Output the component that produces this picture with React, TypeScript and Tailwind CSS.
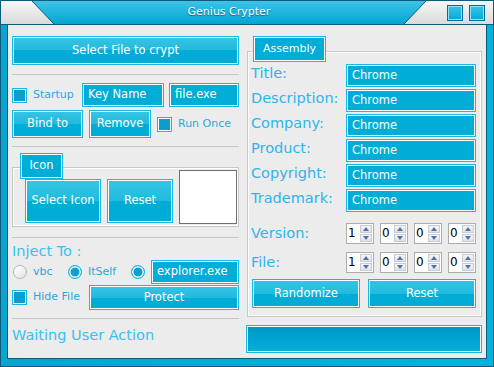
import React from 'react';

const font = 'font-["DejaVu_Sans",sans-serif]';

function Btn({ children, className = '' }: { children: React.ReactNode; className?: string }) {
  return (
    <div
      className={`flex items-center justify-center border border-[#1ab8e0] bg-[linear-gradient(#36c4e5,#22bade_50%,#00add6_50%,#00abd5)] text-[11.5px] text-white shadow-[inset_0_0_0_1px_#ffffff] ${className}`}
    >
      {children}
    </div>
  );
}

function Field({ children, className = '' }: { children: React.ReactNode; className?: string }) {
  return (
    <div
      className={`flex items-center border border-[#1ab8e0] bg-[#00add6] pl-[5px] text-[11.5px] text-white shadow-[inset_0_0_0_1px_#ffffff] ${className}`}
    >
      {children}
    </div>
  );
}

function Check() {
  return <div className="h-[15px] w-[15px] shrink-0 border border-[#1ab8e0] bg-[#0a9dcf] shadow-[inset_0_0_0_1px_#ffffff]" />;
}

function Radio({ on }: { on?: boolean }) {
  if (on)
    return (
      <div className="h-[14px] w-[14px] shrink-0 rounded-full border border-[#1ab8e0] bg-[#0a9fd0] shadow-[inset_0_0_0_1.5px_#ffffff]" />
    );
  return (
    <div className="h-[14px] w-[14px] shrink-0 rounded-full border border-[#b4b4b4] bg-[linear-gradient(135deg,#ffffff,#e2e2e2)]" />
  );
}

function Sep({ className = '' }: { className?: string }) {
  return <div className={`h-[2px] border-t border-[#c5c5c5] border-b-white ${className}`} />;
}

function Tab({ children, className = '' }: { children: React.ReactNode; className?: string }) {
  return (
    <div
      className={`relative z-10 flex items-center justify-center border border-[#1ab8e0] bg-[#00add6] text-[11.5px] text-white shadow-[inset_0_0_0_1px_#ffffff] ${className}`}
    >
      {children}
    </div>
  );
}

function Arrow({ up }: { up?: boolean }) {
  return (
    <svg width="6" height="4" viewBox="0 0 6 4">
      <path d={up ? 'M0 4 L3 0 L6 4 Z' : 'M0 0 L3 4 L6 0 Z'} fill="#5470a8" />
    </svg>
  );
}

function Spin({ v }: { v: string }) {
  return (
    <div className="flex h-[21px] w-[28px] border border-[#acacac] bg-white">
      <div className="flex-1 pl-[1px] text-[12px] leading-[19px] text-black">{v}</div>
      <div className="flex w-[14px] flex-col gap-px p-px">
        <div className="flex flex-1 items-center justify-center border border-[#c7cbd6] bg-[linear-gradient(#f6f6fa,#dfe0e8)]">
          <Arrow up />
        </div>
        <div className="flex flex-1 items-center justify-center border border-[#c7cbd6] bg-[linear-gradient(#f6f6fa,#dfe0e8)]">
          <Arrow />
        </div>
      </div>
    </div>
  );
}

function TitleBar() {
  return (
    <div className="relative flex h-[24px] shrink-0 items-center border-b border-[#0b5c7c] bg-[linear-gradient(#f7f7f7,#dadada)]">
      <svg className="absolute inset-0" width="492" height="23" viewBox="0 0 492 23">
        <defs>
          <linearGradient id="tb" x1="0" y1="0" x2="0" y2="1">
            <stop offset="0" stopColor="#3fc3e6" />
            <stop offset="1" stopColor="#00a6d3" />
          </linearGradient>
        </defs>
        <polygon points="31,0 425,0 403,23 53,23" fill="url(#tb)" />
        <line x1="31" y1="0" x2="53" y2="23" stroke="#0b5c7c" strokeWidth="1" />
        <line x1="425" y1="0" x2="403" y2="23" stroke="#0b5c7c" strokeWidth="1" />
      </svg>
      <div className="relative flex-1 pl-[10px] text-center text-[11px] text-white [text-shadow:0_1px_1px_rgba(0,70,100,0.7)]">
        Genius Crypter
      </div>
      <div className="relative flex gap-[6px] pr-[8px]">
        <div className="h-[16px] w-[16px] border border-[#006f96] bg-[linear-gradient(#39c4e8,#02a9d6)] shadow-[inset_0_0_0_1px_#8fe0f5]" />
        <div className="h-[16px] w-[16px] border border-[#006f96] bg-[linear-gradient(#39c4e8,#02a9d6)] shadow-[inset_0_0_0_1px_#8fe0f5]" />
      </div>
    </div>
  );
}

const labels = ['Title:', 'Description:', 'Company:', 'Product:', 'Copyright:', 'Trademark:'];

export default function App() {
  return (
    <div className={`flex h-[367px] w-[494px] flex-col border border-[#0b5c7c] bg-[linear-gradient(90deg,#0aa4d0,#05b2dc)] ${font}`}>
      <TitleBar />
      <div className="mx-[6px] mb-[7px] flex flex-1 border border-t-0 border-[#0b5c7c] bg-[#ececec] px-[4px]">
        {/* left column */}
        <div className="flex w-[227px] flex-col">
          <Btn className="mt-[11px] h-[29px]">Select File to crypt</Btn>
          <Sep className="mt-[9px]" />
          <div className="mt-[7px] flex h-[24px] items-center">
            <Check />
            <span className="ml-[6px] w-[49px] text-[11px] text-[#2ea6dc]">Startup</span>
            <Field className="h-[24px] w-[82px]">Key Name</Field>
            <Field className="ml-[5px] h-[24px] w-[70px]">file.exe</Field>
          </div>
          <div className="mt-[3px] flex h-[28px] items-center">
            <Btn className="h-[28px] w-[71px]">Bind to</Btn>
            <Btn className="ml-[6px] h-[28px] w-[62px]">Remove</Btn>
            <div className="ml-[6px] flex items-center">
              <Check />
            </div>
            <span className="ml-[6px] text-[11px] text-[#2ea6dc]">Run Once</span>
          </div>
          <Sep className="mt-[8px]" />
          <Tab className="ml-[8px] mt-[5px] h-[26px] w-[43px]">Icon</Tab>
          <div className="-mt-[12px] flex h-[60px] items-start border border-[#c8c8c8] pl-[12px] shadow-[inset_0_0_0_1px_#ffffff]">
            <Btn className="mt-[11px] h-[44px] w-[76px]">Select Icon</Btn>
            <Btn className="ml-[6px] mt-[11px] h-[44px] w-[66px]">Reset</Btn>
            <div className="ml-[6px] mt-[2px] h-[54px] w-[58px] border border-[#6e6e6e] bg-white" />
          </div>
          <Sep className="mt-[10px]" />
          <div className="mt-[4px] h-[17px] text-[14.5px] leading-[17px] text-[#36c2f2]">Inject To :</div>
          <div className="flex h-[24px] items-center">
            <div className="ml-px">
              <Radio />
            </div>
            <span className="ml-[6px] w-[35px] text-[11px] text-[#2ea6dc]">vbc</span>
            <Radio on />
            <span className="ml-[6px] w-[43px] text-[11px] text-[#2ea6dc]">ItSelf</span>
            <Radio on />
            <Field className="ml-[6px] h-[24px] w-[88px]">explorer.exe</Field>
          </div>
          <div className="mt-px flex h-[25px] items-center">
            <Check />
            <span className="ml-[6px] w-[56px] text-[11px] text-[#2ea6dc]">Hide File</span>
            <Btn className="h-[25px] w-[150px]">Protect</Btn>
          </div>
          <Sep className="mt-[8px]" />
          <div className="mt-[6px] text-[14.5px] leading-[18px] text-[#36c2f2]">Waiting User Action</div>
        </div>
        {/* right column */}
        <div className="ml-[7px] flex w-[236px] flex-col">
          <Tab className="ml-[7px] mt-[11px] h-[26px] w-[73px]">
            <span className="text-[11px]">Assembly</span>
          </Tab>
          <div className="-mt-[11px] ml-px flex h-[266px] flex-col border border-[#c8c8c8] pl-[3px] pr-[5px] shadow-[inset_0_0_0_1px_#ffffff]">
            <div className="mt-[12px] flex flex-col gap-[2px]">
              {labels.map((l) => (
                <div key={l} className="flex h-[23px] items-start">
                  <span className="w-[95px] text-[14.5px] leading-[18px] text-[#2db6ec]">{l}</span>
                  <Field className="h-[23px] flex-1">Chrome</Field>
                </div>
              ))}
            </div>
            <div className="mt-[11px] flex h-[21px] items-center">
              <span className="w-[95px] text-[14.5px] text-[#2db6ec]">Version:</span>
              <div className="flex gap-[6px]">
                <Spin v="1" />
                <Spin v="0" />
                <Spin v="0" />
                <Spin v="0" />
              </div>
            </div>
            <div className="mt-[8px] flex h-[21px] items-center">
              <span className="w-[95px] text-[14.5px] text-[#2db6ec]">File:</span>
              <div className="flex gap-[6px]">
                <Spin v="1" />
                <Spin v="0" />
                <Spin v="0" />
                <Spin v="0" />
              </div>
            </div>
            <div className="mt-[6px] flex gap-[8px] pl-px">
              <Btn className="h-[29px] w-[108px]">Randomize</Btn>
              <Btn className="h-[29px] w-[108px]">Reset</Btn>
            </div>
          </div>
          <div className="mt-[8px] h-[28px] border border-[#1ab8e0] bg-[linear-gradient(#0096c6,#00b0d9)] shadow-[inset_0_0_0_1px_#ffffff]" />
        </div>
      </div>
    </div>
  );
}
